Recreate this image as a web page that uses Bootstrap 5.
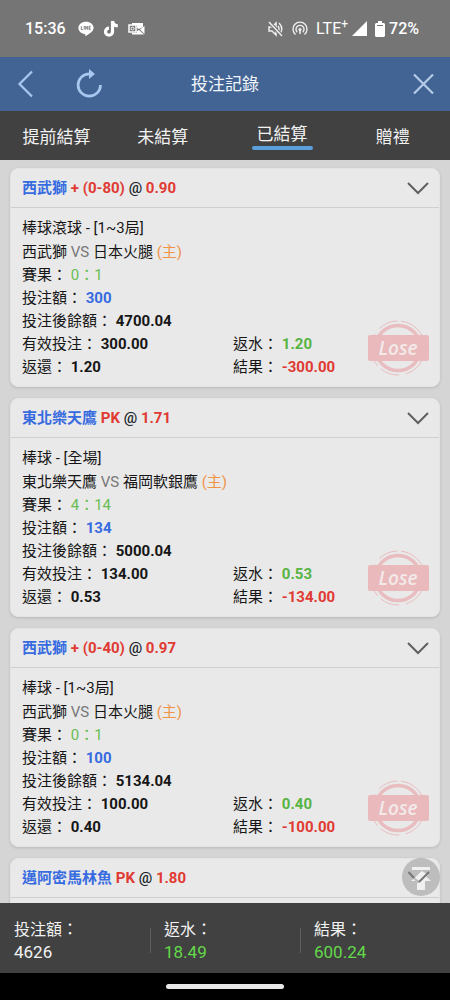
<!DOCTYPE html>
<html lang="zh-Hant">
<head>
<meta charset="utf-8">
<meta name="viewport" content="width=device-width, initial-scale=1">
<title>投注記錄</title>
<link href="https://cdn.jsdelivr.net/npm/bootstrap@5.3.0/dist/css/bootstrap.min.css" rel="stylesheet">
<style>
body{font-family:Roboto,"Noto Sans CJK TC",sans-serif;font-size:15px;line-height:23px;background:#d5d5d5;color:#161616}
svg{display:block;flex:none}
.statusbar{background:#757575;height:57px;padding:0 31px 0 25px;font-size:16px;color:#fff}
.notices{gap:9px;margin-left:12px}
.topbar{background:#426495;height:54px;padding:0 14px;font-size:17px;color:#f1f5fa}
.topbar h1{font-size:17px;line-height:24px}
.icon-btn{color:#a9c8f0}
.refresh{margin-left:42px}
.tabs-row{background:#414141;height:49px;padding:2px 16px 0 0}
.tab-link{font-size:17px;line-height:24px;color:#f2f2f2;text-decoration:none}
.tab-link.active{padding-bottom:2px}
.tab-link.active span{padding:0 5px}
.tab-link.active span::after{content:"";display:block;height:4px;margin:0 -5px;border-radius:2px;background:#5c9fdd}
.tab-mid{width:23%}.tab-side{width:26%}.tab-wide{width:32%}.tab-end{width:19%}
.bets{padding:8px 10px;scrollbar-width:none;gap:11px}
.bets::-webkit-scrollbar{display:none}
.bet{background:#e9e9e9;border:1px solid #e4e4e4;border-radius:8px;box-shadow:0 1px 3px #0002;flex:none}
.bet-head{height:39px;padding:0 9px 0 11px;border-bottom:1px solid #cfcfcf}
.bet-head h2{font-size:15px;line-height:23px}
.bet-body{padding:8px 11px 7px;min-height:178px}
.bet-body p{line-height:24px}
.pairs{display:grid;grid-template-columns:52% 48%}
.whole{grid-column:1/-1}
.c-blue{color:#376be0}.c-red{color:#e03a33}.c-green{color:#57b443}.c-lime{color:#68bd55}.c-orange{color:#f0944a}.c-gray{color:#777}
.stamp{right:10px;bottom:10px;width:62px;height:56px}
.stamp svg{position:absolute;inset:0}
.stamp span{position:relative;font:italic 600 19px/24px "Open Sans",sans-serif;color:#f3e9e9}
.totals{background:#414141;height:70px;padding:5px 0 0;font-size:16px;color:#f2f2f2}
.total{padding:0 14px;flex:1 1 0}
.total b{font-weight:400;font-size:17px}
.total+.total::before{content:"";position:absolute;left:0;top:10px;height:25px;border-left:1px solid #606060}
.c-bright{color:#64d94a}
.homebar{background:#000;height:27px}
.homebar span{width:118px;height:5px;border-radius:3px;background:#e8e8e8}
.to-top,.to-top:hover{right:10px;bottom:7px;width:38px;height:38px;background:#9999998c}
</style>
</head>
<body>
<svg width="0" height="0" class="position-absolute" aria-hidden="true">
  <symbol id="chev" viewBox="0 0 24 14"><path d="M2 2l10 10L22 2" fill="none" stroke="#606060" stroke-width="2"/></symbol>
  <symbol id="lose" viewBox="0 0 62 56">
    <g fill="none" stroke="#e9bdbf"><circle cx="31" cy="28" r="22.500" stroke-width="3.500"/><circle cx="31" cy="28" r="27" stroke-width="1" stroke-dasharray="34 7 20 4"/></g>
    <rect x="1" y="15" width="61" height="26" rx="2" fill="#e9b9bc"/>
  </symbol>
</svg>
<div class="vh-100 d-flex flex-column">
  <div class="statusbar d-flex align-items-center flex-shrink-0">
    <span class="fw-medium">15:36</span>
    <div class="notices d-flex align-items-center">
      <svg width="16" height="16" viewBox="0 0 16 16"><path d="M8 .8C3.800.8.4 3.500.4 6.900c0 3 2.700 5.500 6.300 6 .8.2.5 1.300.4 2.200 2.400-1 8.500-4.600 8.500-8.200C15.600 3.500 12.200.8 8 .8z" fill="#fff"/><path d="M3.300 5.200v3.300h1.500M6.200 5v3.700M7.700 8.700V5.200l2 3.300V5M12.700 5.200h-1.500v3.300h1.500M11.200 6.900h1.400" fill="none" stroke="#757575" stroke-width=".9"/></svg>
      <svg width="16" height="18" viewBox="0 0 16 18"><path d="M9.500 1v10.700a3.500 3.500 0 1 1-3.500-3.500M9.500 1c.3 3 2.500 4.800 5.300 4.900" fill="none" stroke="#fff" stroke-width="3.200"/></svg>
      <svg width="18" height="14" viewBox="0 0 18 14"><path d="M4 1h11v4l-4 2-2-1V3H4zM9 9l2-1 5 4.500H4V11h5zM12 7.500L16.500 4v8z" fill="#fff"/><rect x="1" y="3" width="7" height="7" fill="none" stroke="#fff" stroke-width="1.500"/><circle cx="4.500" cy="6.500" r="1.500" fill="none" stroke="#fff"/></svg>
    </div>
    <svg class="ms-auto" width="17" height="16" viewBox="0 0 17 16"><path d="M2 6h3l4-4v12L5 10H2zM11 5q2 3 0 6M12 2q5 5 1 11" fill="none" stroke="#eee" stroke-width="1.500"/><path d="M2 1l13 14" stroke="#757575" stroke-width="3.500"/><path d="M2 1l13 14" stroke="#eee" stroke-width="1.500"/></svg>
    <svg class="mx-2" width="16" height="16" viewBox="0 0 16 16"><g fill="none" stroke="#eee" stroke-width="1.400"><path d="M3.500 13.500a7 7 0 1 1 9 0M5.200 11.200a4 4 0 1 1 5.600 0"/></g><circle cx="8" cy="8.500" r="1.600" fill="#eee"/><path d="M8 9v4" stroke="#eee" stroke-width="1.500"/></svg>
    <span>LTE<sup>+</sup></span>
    <svg class="ms-1" width="15" height="15" viewBox="0 0 15 15"><path d="M15 0v15H0z" fill="#fff"/></svg>
    <svg class="ms-2 me-1" width="10" height="16" viewBox="0 0 10 16"><path d="M3 0h4v2h2l1 1v12l-1 1H1l-1-1V3l1-1h2z" fill="#fff"/><path d="M2 4h6v1H2z" fill="#757575"/></svg>
    <span class="fw-medium">72%</span>
  </div>
  <header class="topbar d-flex align-items-center flex-shrink-0 position-relative">
    <button class="btn p-0 border-0 icon-btn" aria-label="返回"><svg width="20" height="28" viewBox="0 0 20 28"><path d="M18 1.500L5.500 14 18 26.500" fill="none" stroke="currentColor" stroke-width="2.200"/></svg></button>
    <button class="btn p-0 border-0 icon-btn refresh" aria-label="重新整理"><svg width="26" height="30" viewBox="0 0 26 30"><path d="M24.500 16a11.200 11.200 0 1 1-11.200-11.200" fill="none" stroke="currentColor" stroke-width="2.700"/><path d="M13 0v10l6-5z" fill="currentColor"/></svg></button>
    <h1 class="m-0 fw-normal position-absolute start-0 end-0 text-center pe-none">投注記錄</h1>
    <button class="btn p-0 border-0 icon-btn ms-auto" aria-label="關閉"><svg width="24" height="24" viewBox="0 0 24 24"><path d="M2 2.500l19 19M21 2.500l-19 19" stroke="#b5cbe8" stroke-width="2.200"/></svg></button>
  </header>
  <nav class="tabs-row d-flex align-items-center text-center flex-shrink-0">
    <a class="tab-link tab-side" href="#">提前結算</a>
    <a class="tab-link tab-mid" href="#">未結算</a>
    <a class="tab-link tab-wide active" href="#" aria-current="page"><span class="d-inline-block">已結算</span></a>
    <a class="tab-link tab-end" href="#">贈禮</a>
  </nav>
  <div class="flex-grow-1 position-relative d-flex flex-column overflow-hidden">
  <main class="bets flex-grow-1 d-flex flex-column overflow-auto">
    <article class="bet">
      <div class="bet-head d-flex align-items-center justify-content-between">
        <h2 class="m-0 fw-bold c-red"><span class="c-blue">西武獅</span> + (0-80) <span class="text-dark fw-medium">@</span> 0.90</h2>
        <button class="btn p-0 border-0" aria-label="收合"><svg width="24" height="14"><use href="#chev"/></svg></button>
      </div>
      <div class="bet-body position-relative">
        <p class="m-0">棒球滾球 - [1~3局]</p>
        <p class="m-0">西武獅 <span class="c-gray">VS</span> 日本火腿 <span class="c-orange">(主)</span></p>
        <div class="pairs">
          <div class="whole">賽果： <span class="c-lime">0：1</span></div>
          <div class="whole">投注額： <b class="c-blue">300</b></div>
          <div class="whole">投注後餘額： <b>4700.04</b></div>
          <div>有效投注： <b>300.00</b></div><div>返水： <b class="c-green">1.20</b></div>
          <div>返還： <b>1.20</b></div><div>結果： <b class="c-red">-300.00</b></div>
        </div>
        <div class="stamp position-absolute d-flex align-items-center justify-content-center"><svg width="62" height="56"><use href="#lose"/></svg><span>Lose</span></div>
      </div>
    </article>
    <article class="bet">
      <div class="bet-head d-flex align-items-center justify-content-between">
        <h2 class="m-0 fw-bold c-red"><span class="c-blue">東北樂天鷹</span> PK <span class="text-dark fw-medium">@</span> 1.71</h2>
        <button class="btn p-0 border-0" aria-label="收合"><svg width="24" height="14"><use href="#chev"/></svg></button>
      </div>
      <div class="bet-body position-relative">
        <p class="m-0">棒球 - [全場]</p>
        <p class="m-0">東北樂天鷹 <span class="c-gray">VS</span> 福岡軟銀鷹 <span class="c-orange">(主)</span></p>
        <div class="pairs">
          <div class="whole">賽果： <span class="c-lime">4：14</span></div>
          <div class="whole">投注額： <b class="c-blue">134</b></div>
          <div class="whole">投注後餘額： <b>5000.04</b></div>
          <div>有效投注： <b>134.00</b></div><div>返水： <b class="c-green">0.53</b></div>
          <div>返還： <b>0.53</b></div><div>結果： <b class="c-red">-134.00</b></div>
        </div>
        <div class="stamp position-absolute d-flex align-items-center justify-content-center"><svg width="62" height="56"><use href="#lose"/></svg><span>Lose</span></div>
      </div>
    </article>
    <article class="bet">
      <div class="bet-head d-flex align-items-center justify-content-between">
        <h2 class="m-0 fw-bold c-red"><span class="c-blue">西武獅</span> + (0-40) <span class="text-dark fw-medium">@</span> 0.97</h2>
        <button class="btn p-0 border-0" aria-label="收合"><svg width="24" height="14"><use href="#chev"/></svg></button>
      </div>
      <div class="bet-body position-relative">
        <p class="m-0">棒球 - [1~3局]</p>
        <p class="m-0">西武獅 <span class="c-gray">VS</span> 日本火腿 <span class="c-orange">(主)</span></p>
        <div class="pairs">
          <div class="whole">賽果： <span class="c-lime">0：1</span></div>
          <div class="whole">投注額： <b class="c-blue">100</b></div>
          <div class="whole">投注後餘額： <b>5134.04</b></div>
          <div>有效投注： <b>100.00</b></div><div>返水： <b class="c-green">0.40</b></div>
          <div>返還： <b>0.40</b></div><div>結果： <b class="c-red">-100.00</b></div>
        </div>
        <div class="stamp position-absolute d-flex align-items-center justify-content-center"><svg width="62" height="56"><use href="#lose"/></svg><span>Lose</span></div>
      </div>
    </article>
    <article class="bet">
      <div class="bet-head d-flex align-items-center justify-content-between">
        <h2 class="m-0 fw-bold c-red"><span class="c-blue">邁阿密馬林魚</span> PK <span class="text-dark fw-medium">@</span> 1.80</h2>
        <button class="btn p-0 border-0 invisible" aria-label="收合"><svg width="24" height="14"><use href="#chev"/></svg></button>
      </div>
      <div class="bet-body"></div>
    </article>
  </main>
  <button class="to-top btn rounded-circle border-0 p-0 position-absolute d-flex align-items-center justify-content-center" aria-label="回到頂部"><svg width="38" height="38" viewBox="0 0 38 38"><path d="M10 9h18v3H10zM19 14l10 9h-6v9h-8v-9H9z" fill="#f0f0f0"/><path d="M7 14.500l9 9 9-9" fill="none" stroke="#bcbcbc" stroke-width="3"/><path d="M20 13l6 4-7 7-6-4z" fill="#f0f0f0"/><path d="M6.500 14l5.500 6M17 24l10-10" fill="none" stroke="#777" stroke-width="2"/></svg></button>
  </div>
  <footer class="totals d-flex align-items-center flex-shrink-0">
    <div class="total position-relative">投注額：<br><b>4626</b></div>
    <div class="total position-relative">返水：<br><b class="c-bright">18.49</b></div>
    <div class="total position-relative">結果：<br><b class="c-bright">600.24</b></div>
  </footer>
  <div class="homebar d-flex align-items-center justify-content-center flex-shrink-0"><span></span></div>
</div>
<script src="https://cdn.jsdelivr.net/npm/bootstrap@5.3.0/dist/js/bootstrap.bundle.min.js"></script>
</body>
</html>
